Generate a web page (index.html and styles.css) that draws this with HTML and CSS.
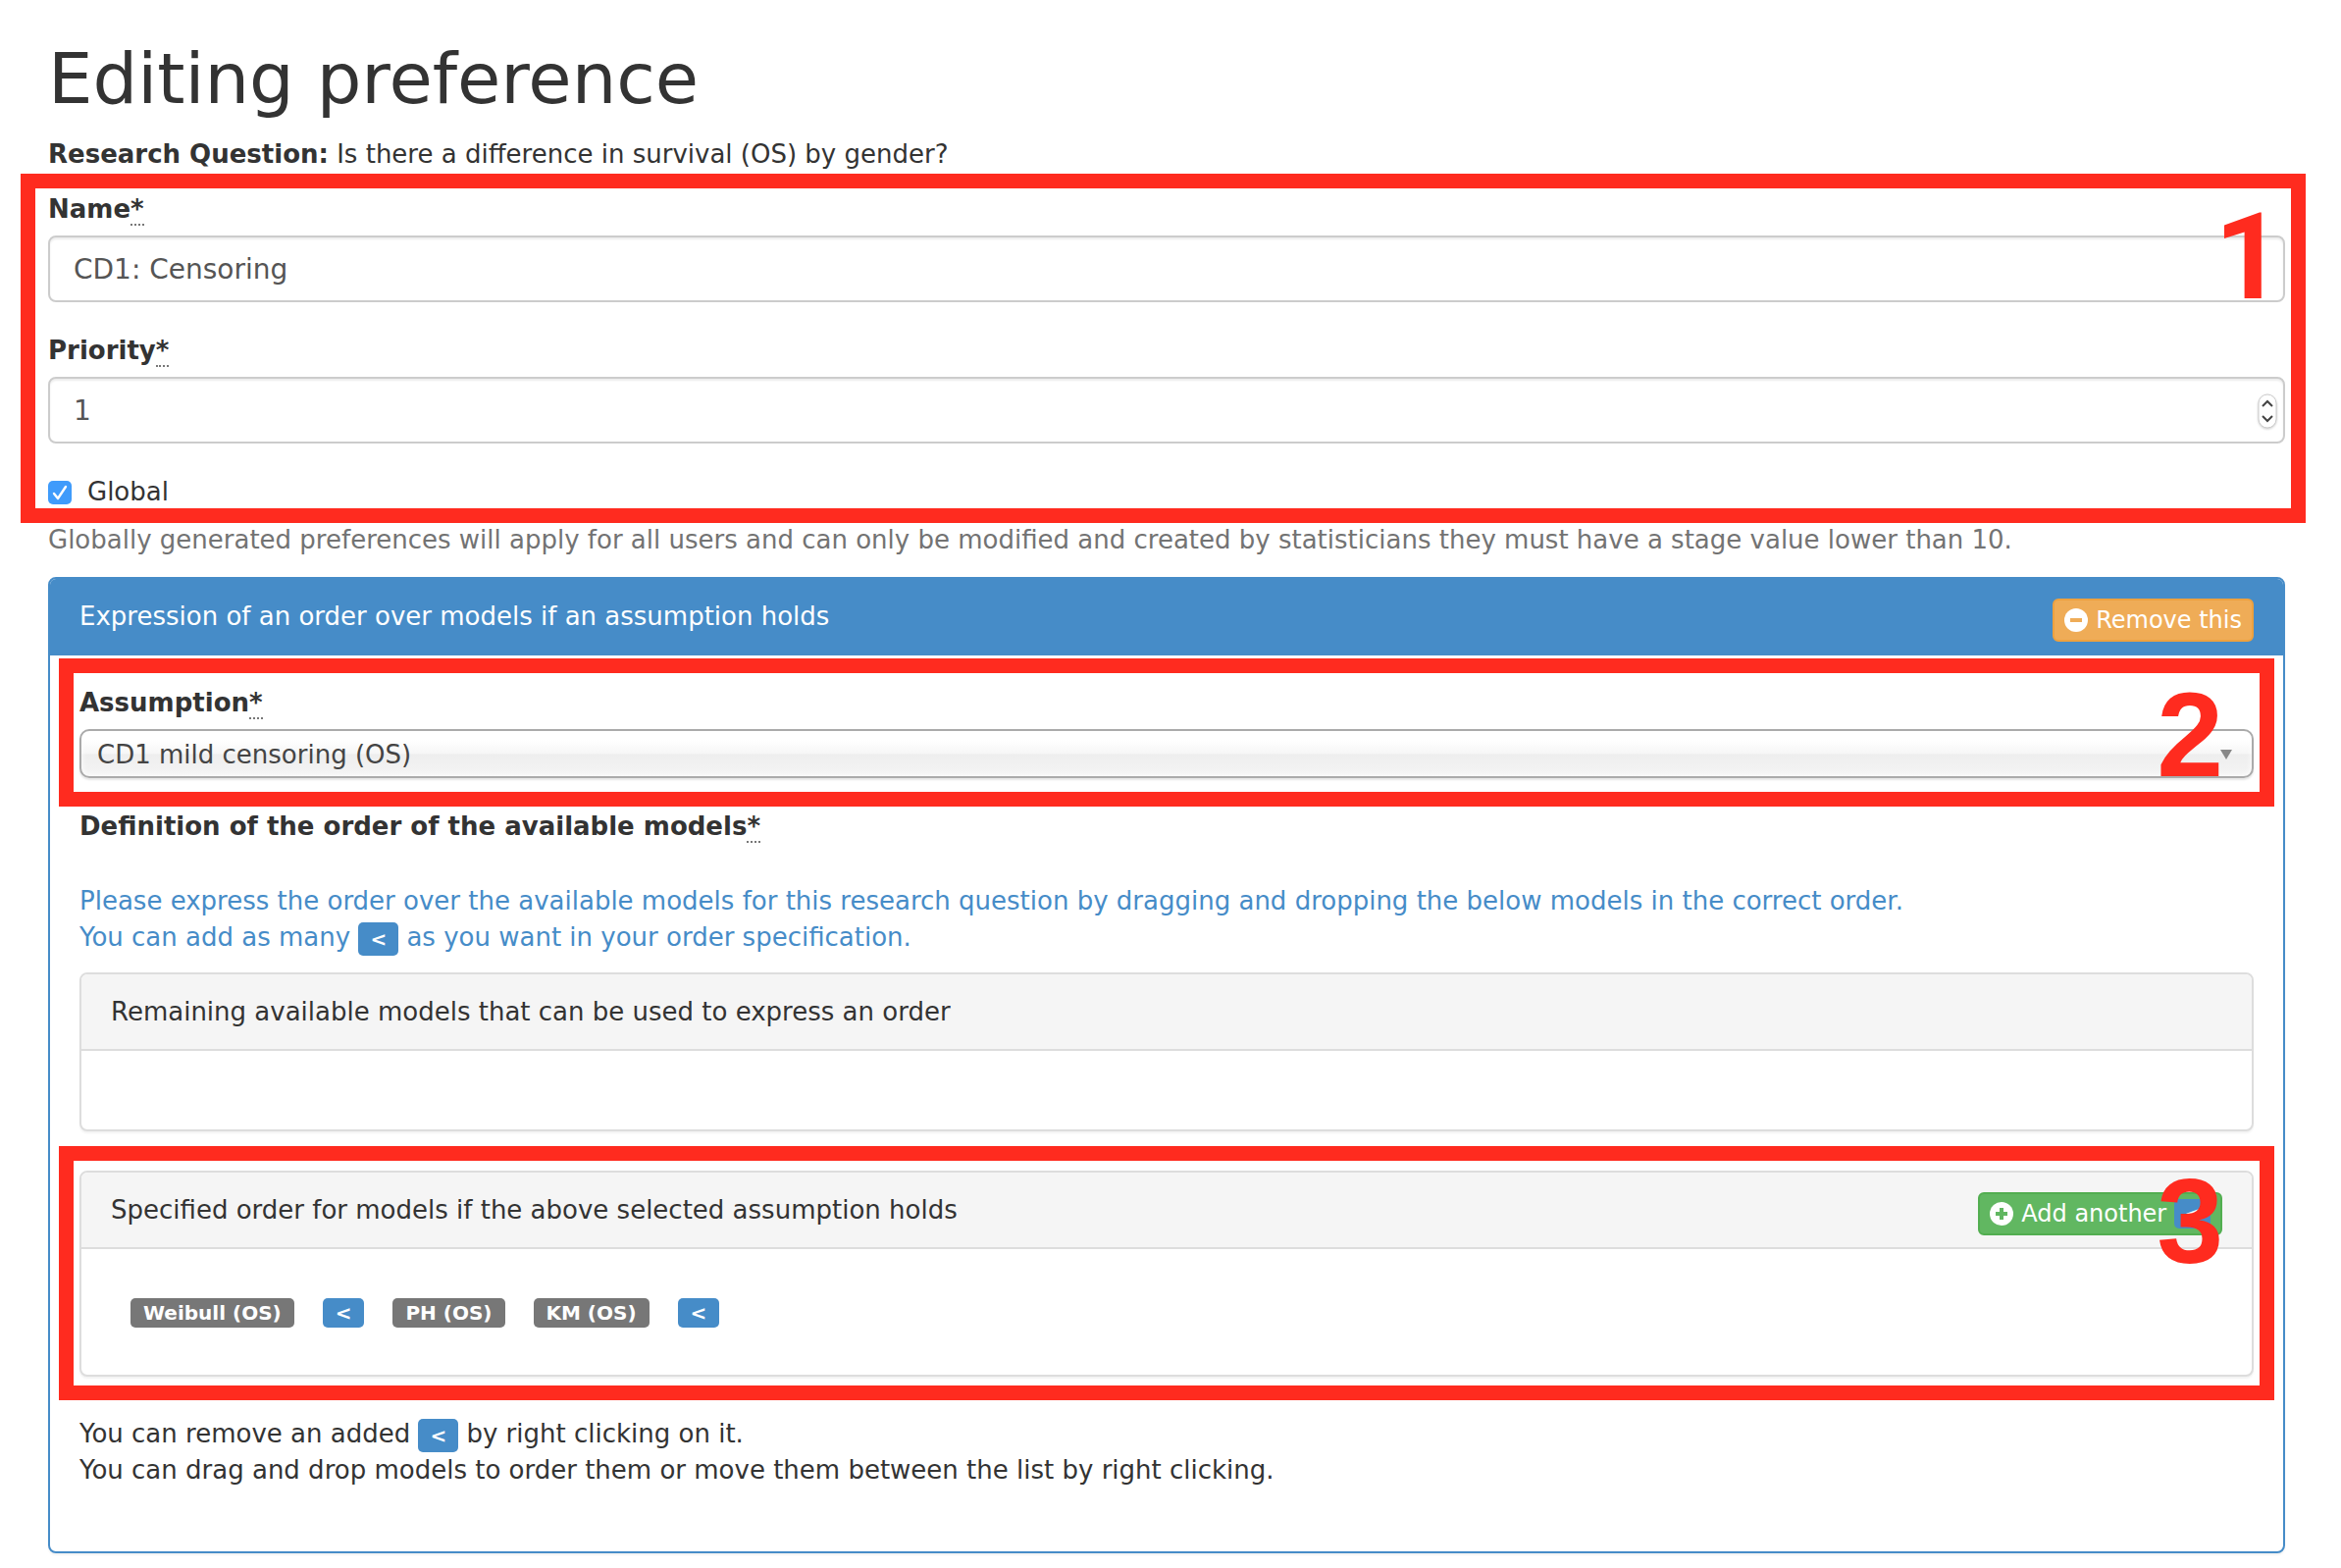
FILE: index.html
```html
<!DOCTYPE html>
<html lang="en">
<head>
<meta charset="utf-8">
<title>Editing preference</title>
<link rel="stylesheet" href="styles.css">
</head>
<body>
<main class="page">
  <h1 class="title">Editing preference</h1>
  <p class="question"><strong>Research Question:</strong> Is there a difference in survival (OS) by gender?</p>
  <form>
    <section class="callout callout-outer">
      <div class="field">
        <label class="label" for="name">Name<abbr title="required">*</abbr></label>
        <input class="control" id="name" type="text" value="CD1: Censoring">
      </div>
      <div class="field">
        <label class="label" for="priority">Priority<abbr title="required">*</abbr></label>
        <div class="control-wrap">
          <input class="control" id="priority" type="number" value="1">
          <svg class="spinner" width="20" height="36" viewBox="0 0 20 36" fill="none" aria-hidden="true">
            <rect x="1" y="1" width="18" height="34" rx="9" fill="#fff" stroke="#ccc"/>
            <path d="M5 13l5-5 5 5M5 23l5 5 5-5" stroke="#444" stroke-width="2"/>
          </svg>
        </div>
      </div>
      <div class="check">
        <input class="tick" id="global" type="checkbox" checked>
        <label for="global">Global</label>
        <svg class="tick-mark" width="24" height="24" viewBox="0 0 24 24" fill="none" aria-hidden="true"><path d="M6 13l4 5L18 6" stroke="#fff" stroke-width="2.4" stroke-linecap="round" stroke-linejoin="round"/></svg>
      </div>
      <span class="frame"></span>
      <span class="number">1</span>
    </section>
    <p class="help">Globally generated preferences will apply for all users and can only be modified and created by statisticians they must have a stage value lower than 10.</p>

    <section class="panel panel-primary">
      <header class="heading">
        <span>Expression of an order over models if an assumption holds</span>
        <button class="btn btn-warning" type="button">
          <svg width="24" height="24" viewBox="0 0 24 24" aria-hidden="true"><circle cx="12" cy="12" r="12" fill="#fff"/><path d="M6 12h12" stroke="#efac57" stroke-width="4"/></svg>
          Remove this
        </button>
      </header>
      <div class="body">
        <div class="callout callout-select">
          <label class="label" for="assumption">Assumption<abbr title="required">*</abbr></label>
          <div class="control-wrap">
            <select class="select" id="assumption"><option>CD1 mild censoring (OS)</option></select>
            <svg class="caret" width="12" height="10" viewBox="0 0 12 10" aria-hidden="true"><path d="M0 0h12L6 10z" fill="#888"/></svg>
          </div>
          <span class="frame"></span>
          <span class="number">2</span>
        </div>
        <p class="definition"><strong>Definition of the order of the available models<abbr title="required">*</abbr></strong></p>
        <p class="info">Please express the order over the available models for this research question by dragging and dropping the below models in the correct order.<br>You can add as many <span class="badge badge-tall">&lt;</span> as you want in your order specification.</p>

        <section class="panel">
          <header class="heading"><span>Remaining available models that can be used to express an order</span></header>
          <div class="list list-empty"></div>
        </section>

        <div class="callout callout-order">
          <section class="panel">
            <header class="heading">
              <span>Specified order for models if the above selected assumption holds</span>
              <button class="btn btn-success" type="button">
                <svg width="24" height="24" viewBox="0 0 24 24" aria-hidden="true"><circle cx="12" cy="12" r="12" fill="#fff"/><path d="M6 12h12M12 6v12" stroke="#61b761" stroke-width="4"/></svg>
                Add another <span class="badge badge-inset">&lt;</span>
              </button>
            </header>
            <div class="list">
              <span class="badge badge-model">Weibull (OS)</span>
              <span class="badge">&lt;</span>
              <span class="badge badge-model">PH (OS)</span>
              <span class="badge badge-model">KM (OS)</span>
              <span class="badge">&lt;</span>
            </div>
          </section>
          <span class="frame"></span>
          <span class="number">3</span>
        </div>
        <p class="hint">You can remove an added <span class="badge badge-tall">&lt;</span> by right clicking on it.<br>You can drag and drop models to order them or move them between the list by right clicking.</p>
      </div>
    </section>
  </form>
</main>
</body>
</html>
```

FILE: styles.css
```css
* { box-sizing: border-box; }

body {
  margin: 0;
  background: #fff;
  color: #333;
  font: 26px/37px "DejaVu Sans", Verdana, sans-serif;
}

.page { padding: 40px 57px 12px 49px; }

p { margin: 0; }

.title {
  margin: 0 0 19px;
  font-size: 72px;
  line-height: 80px;
  font-weight: 400;
}

.question { margin-bottom: 19px; }

abbr[title] {
  text-decoration: none;
  border-bottom: 2px dotted #777;
}

.label {
  display: block;
  width: fit-content;
  margin-bottom: 8px;
  font-weight: 700;
}

.field { margin-bottom: 31px; }

.control-wrap { position: relative; }

.control {
  display: block;
  width: 100%;
  height: 68px;
  padding: 0 24px;
  border: 2px solid #ccc;
  border-radius: 8px;
  background: #fff;
  box-shadow: inset 0 2px 2px rgba(0, 0, 0, .075);
  color: #555;
  font: inherit;
  font-size: 28px;
  appearance: textfield;
}

.control::-webkit-inner-spin-button { appearance: none; }

.spinner {
  position: absolute;
  top: 17px;
  right: 8px;
  filter: drop-shadow(0 1px 1px rgba(0, 0, 0, .2));
}

.check {
  position: relative;
  display: flex;
  align-items: center;
  gap: 16px;
}

.tick {
  appearance: none;
  width: 24px;
  height: 24px;
  margin: 0;
  border-radius: 5px;
  background: #3f9bfb;
}

.tick-mark {
  position: absolute;
  left: 0;
  pointer-events: none;
}

.help {
  margin: 12px 0 19px;
  color: #737373;
}

/* Numbered frames laid over the parts of the form */
.callout { position: relative; }

.frame {
  position: absolute;
  border: 15px solid #ff2b1f;
  pointer-events: none;
}

.number {
  position: absolute;
  color: #ff2b1f;
  font: 700 122px/88px "Liberation Sans", Arial, sans-serif;
  pointer-events: none;
}

.callout-outer > .frame { inset: -18px -21px -13px -28px; }
.callout-outer > .number { top: 24px; right: 2px; font-family: Roboto, sans-serif; }
.callout-select > .frame { inset: -27px -21px -29px; }
.callout-select > .number { top: 7px; right: 31px; }
.callout-order > .frame { inset: -25px -21px -24px; }
.callout-order > .number { top: 8px; right: 31px; }

.panel {
  border: 2px solid #ddd;
  border-radius: 8px;
  background: #fff;
  box-shadow: 0 2px 2px rgba(0, 0, 0, .05);
}

.heading {
  display: flex;
  justify-content: space-between;
  align-items: flex-start;
  padding: 20px 30px 19px;
  border-bottom: 2px solid #ddd;
  border-radius: 6px 6px 0 0;
  background: #f5f5f5;
}

.panel-primary { border-color: #468cc8; }

.panel-primary > .heading {
  border-color: #468cc8;
  background: #468cc8;
  color: #fff;
}

.body { padding: 30px 30px 64px; }

.btn {
  display: flex;
  align-items: center;
  gap: 8px;
  height: 44px;
  margin-bottom: -7px;
  padding: 0 10px;
  border: 2px solid;
  border-radius: 6px;
  color: #fff;
  font: inherit;
  font-size: 24px;
}

.btn-warning { background: #efac57; border-color: #eda13f; }
.btn-success { background: #61b761; border-color: #52ae50; }

.select {
  display: block;
  width: 100%;
  height: 50px;
  padding: 2px 16px 0;
  border: 2px solid #aaa;
  border-radius: 10px;
  background: linear-gradient(#fff 20%, #f6f6f6 50%, #eee 52%, #f4f4f4 100%);
  box-shadow: inset 0 0 6px #fff, 0 2px 2px rgba(0, 0, 0, .1);
  color: #444;
  font: inherit;
  appearance: none;
}

.caret {
  position: absolute;
  top: 21px;
  right: 22px;
  pointer-events: none;
}

.definition { margin: 31px 0 39px; }

.info {
  margin-bottom: 17px;
  color: #468cc8;
}

.badge {
  display: inline-block;
  padding: 0 13px;
  border-radius: 5px;
  background: #468cc8;
  color: #fff;
  font-size: 20px;
  line-height: 30px;
  font-weight: 700;
}

/* Sits inside a line of text without making the line taller */
.badge-tall {
  margin-top: 3px;
  padding: 0 12px;
  line-height: 34px;
  vertical-align: top;
}

.badge-inset { padding: 0 10px; }

.badge-model { background: #777; }

.list {
  display: flex;
  gap: 29px;
  padding: 50px 50px 48px;
}

.list-empty { padding: 40px; }

.callout-order { margin: 40px 0; }
```
